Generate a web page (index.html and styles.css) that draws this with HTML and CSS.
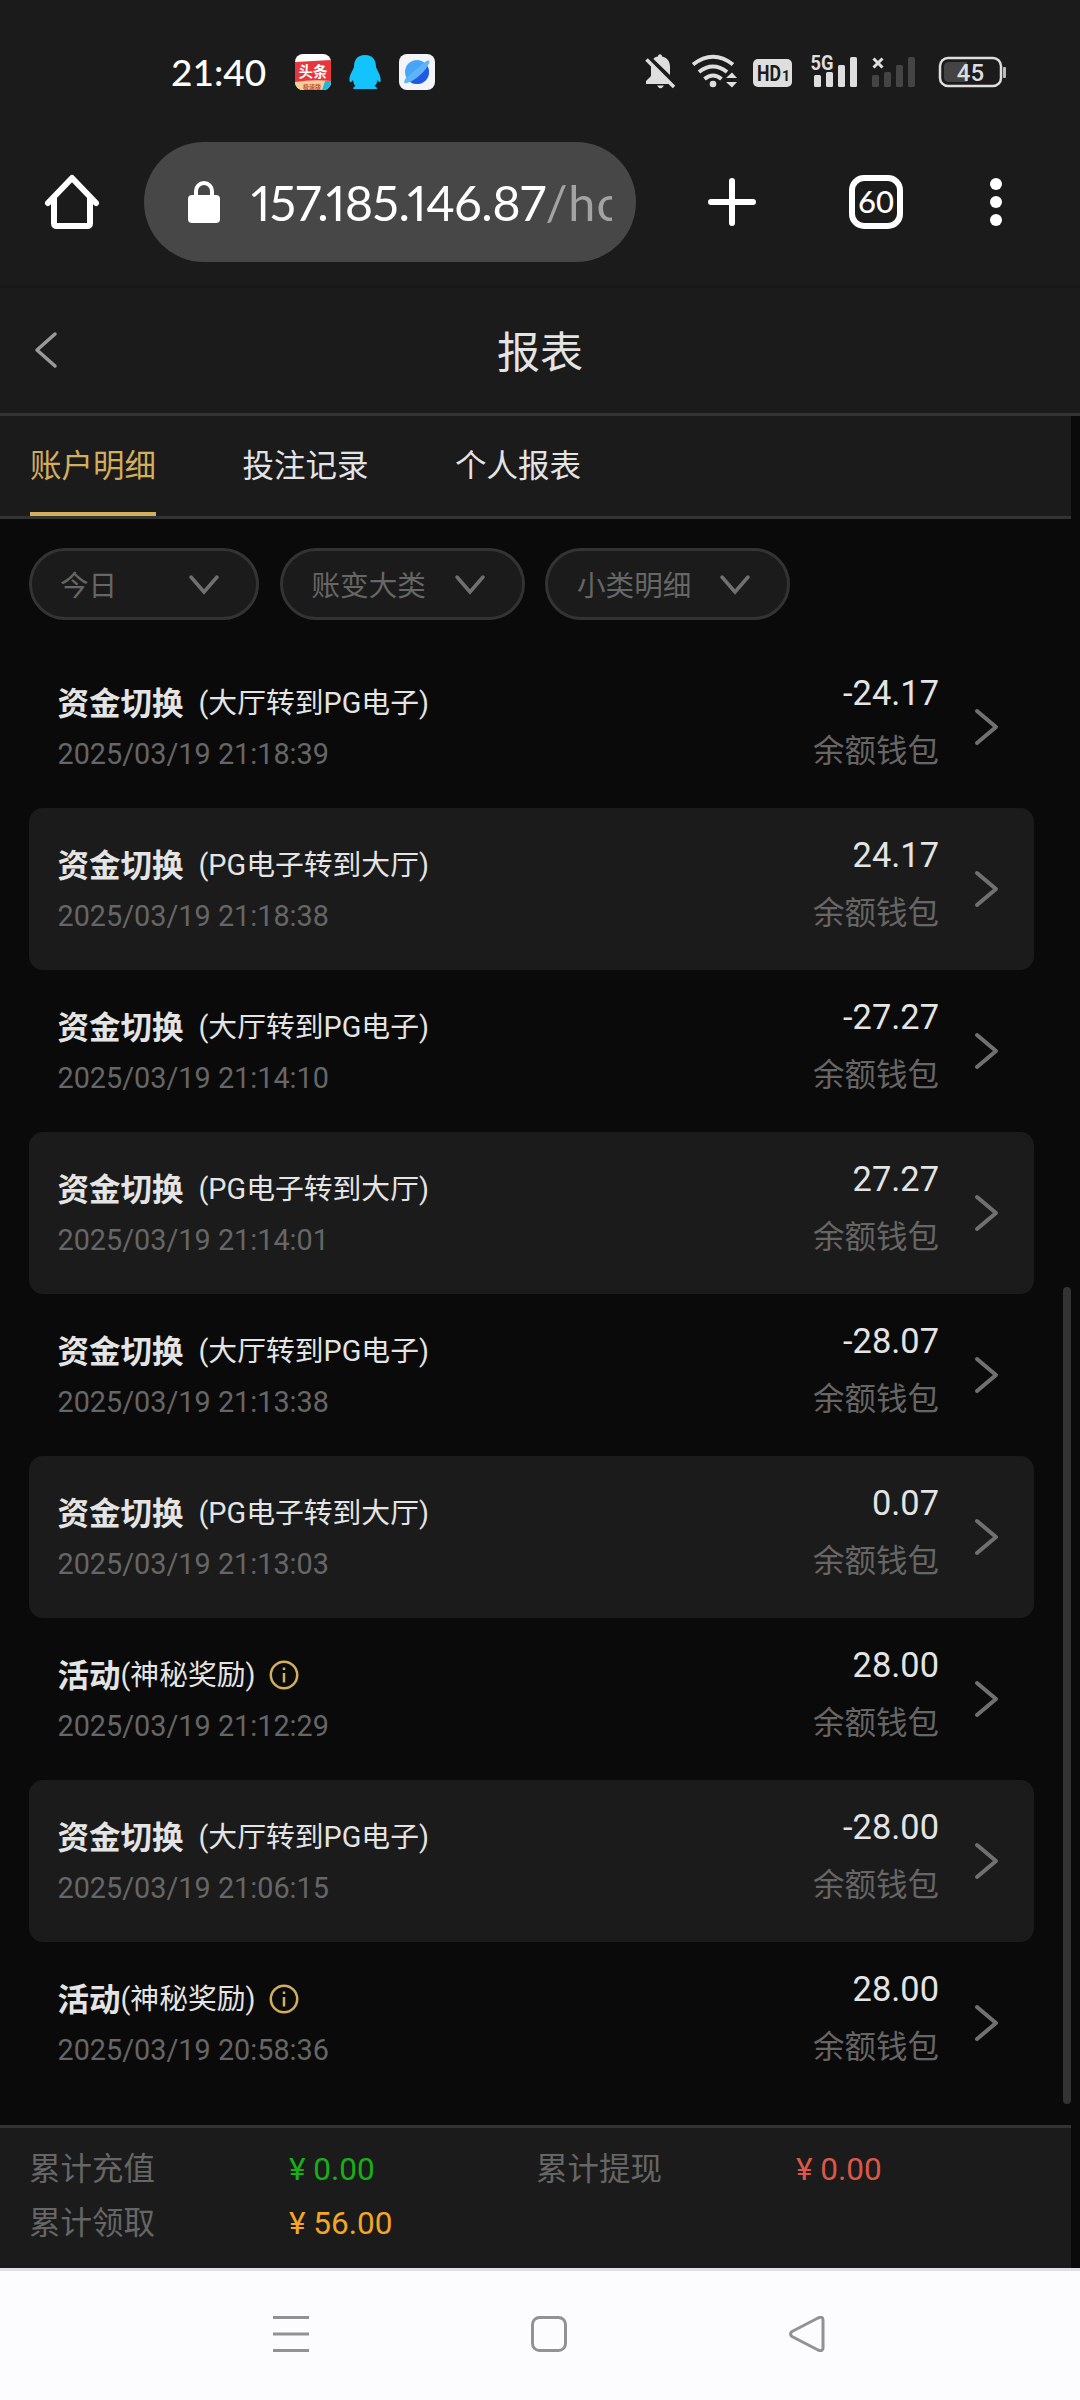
FILE: index.html
```html
<!DOCTYPE html>
<html lang="zh-CN">

<head>
    <meta charset="UTF-8">
    <meta name="viewport" content="width=device-width, initial-scale=1.0">
    <title>报表</title>
    <link rel="stylesheet" href="styles.css">
</head>

<body>
    <svg class="defs">
        <symbol id="right" viewBox="0 0 26 40"><path d="M3 4 L22 20 L3 36" /></symbol>
        <symbol id="down" viewBox="0 0 32 22"><path d="M3 3 L16 18 L29 3" /></symbol>
        <symbol id="info" viewBox="0 0 30 30">
            <circle cx="15" cy="15" r="13.2" />
            <path d="M15 13 V22.5" />
            <path d="M15 7.5 V10" />
        </symbol>
    </svg>

    <!-- status bar -->
    <div class="status">
        <span class="time">21:40</span>
        <svg class="apps" width="144" height="40" viewBox="0 0 144 40">
            <defs>
                <clipPath id="c1"><rect x="2" y="2" width="36" height="36" rx="8" /></clipPath>
                <clipPath id="c3"><circle cx="124" cy="20" r="12" /></clipPath>
            </defs>
            <g clip-path="url(#c1)">
                <rect x="2" y="2" width="36" height="36" fill="#fff" />
                <path d="M2 10 L38 8 V29 L2 31 Z" fill="#e8373c" />
                <path d="M2 30 Q20 27 38 29 V38 H2 Z" fill="#f8cf98" />
                <path d="M32 29 H38 V38 H29 Z" fill="#20b8d8" />
                <text x="20" y="25" class="tt">头条</text>
                <text x="19" y="36.5" class="tt2">极速版</text>
            </g>
            <path d="M72 3 C64 3 61 8 61 15 C60 18 57 22 56.500 26 C56 30 57 32 60 28 C60.500 31 61 33 62.500 34 C60 35 59.500 37 61 37 H83 C85 37 84 35 81.500 34 C83 33 84 31 84.500 28 C87.500 32 88 30 87.500 26 C87 22 84 18 83 15 C83 8 80 3 72 3 Z" fill="#12c4fb" />
            <rect x="106" y="2" width="36" height="36" rx="8" fill="#f3f4f7" />
            <circle cx="124" cy="20" r="12" fill="#48a5f5" />
            <path d="M109 32 Q124 28 140 8 V38 H109 Z" fill="#2158e4" clip-path="url(#c3)" />
            <path d="M132 10 C137 7 138 9 134 15 C129 23 119 30 114 31 C110 32 111 29 113 26 Z" fill="#5eb4f8" />
        </svg>
        <svg class="sys" width="390" height="40" viewBox="0 0 390 40">
            <!-- bell -->
            <g fill="#dedede">
                <path d="M5 32 V29 L10 24 V14 C10 8 13 5 17 4.500 C17 1.500 21 1.500 21 4.500 C26 5.500 29 9 29 15 V24 L35 30 V32 Z" />
                <path d="M16 33.500 H23 Q19.500 39 16 33.500 Z" />
            </g>
            <path d="M7 6 L37 35" stroke="#1b1b1b" stroke-width="6" />
            <path d="M5.500 7.500 L33 35" stroke="#dedede" stroke-width="3.500" />
            <!-- wifi -->
            <g fill="none" stroke="#dedede" stroke-width="4">
                <path d="M52 12.500 Q72 -3 92 12.500" />
                <path d="M58 20 Q72 9 86 20" />
                <path d="M63.500 27 Q72 20 80.500 27" />
            </g>
            <circle cx="72" cy="32" r="3.300" fill="#dedede" />
            <path d="M85 26 L91 20.500 L96 26 Z M85 30 L91 35.500 L96 30 Z" fill="#dedede" />
            <rect x="112" y="7" width="39" height="28" rx="5" fill="#dedede" />
            <text x="116" y="29" class="hd" textLength="24" lengthAdjust="spacingAndGlyphs">HD</text>
            <text x="141" y="29" class="hd1">1</text>
            <text x="169.500" y="18" class="g5" textLength="23" lengthAdjust="spacingAndGlyphs">5G</text>
            <g fill="#dedede">
                <rect x="173" y="23" width="7" height="12" rx="1.500" />
                <rect x="185" y="20" width="7" height="15" rx="1.500" />
                <rect x="197" y="13" width="7" height="22" rx="1.500" />
                <rect x="209" y="5" width="7" height="30" rx="1.500" />
            </g>
            <g fill="#444">
                <rect x="231" y="23" width="7" height="12" rx="1.500" />
                <rect x="243" y="20" width="7" height="15" rx="1.500" />
                <rect x="255" y="13" width="7" height="22" rx="1.500" />
                <rect x="267" y="5" width="7" height="30" rx="1.500" />
            </g>
            <path d="M232.500 6.500 L241.500 15.500 M241.500 6.500 L232.500 15.500" stroke="#dedede" stroke-width="3" />
            <!-- battery -->
            <rect x="299" y="6" width="61" height="28" rx="8" fill="none" stroke="#dedede" stroke-width="2.500" />
            <path d="M308 10 H326 V30 H308 Q303 30 303 25 V15 Q303 10 308 10 Z" fill="#444" />
            <rect x="362" y="15" width="3" height="11" rx="1" fill="#bbb" />
            <text x="329.500" y="29" class="bat">45</text>
        </svg>
    </div>

    <!-- browser bar -->
    <div class="browser">
        <svg class="home" width="60" height="60" viewBox="0 0 60 60">
            <path d="M6 31 L30 6 L54 31 M12 26 V51 Q12 54 15 54 H45 Q48 54 48 51 V26" />
        </svg>
        <div class="url">
            <svg width="32" height="42" viewBox="0 0 32 42">
                <rect x="0" y="14" width="32" height="28" rx="4" fill="#fff" />
                <path d="M8 16 V10 A8 8 0 0 1 24 10 V16" fill="none" stroke="#fff" stroke-width="4" />
            </svg>
            <div class="address">157.185.146.87<span>/ho</span></div>
        </div>
        <svg class="plus" width="48" height="48" viewBox="0 0 48 48"><path d="M24 3 V45 M3 24 H45" /></svg>
        <div class="count">60</div>
        <svg class="dots" width="12" height="48" viewBox="0 0 12 48">
            <circle cx="6" cy="6" r="6" /><circle cx="6" cy="24" r="6" /><circle cx="6" cy="42" r="6" />
        </svg>
    </div>

    <div class="header">
        <svg class="back" width="28" height="42" viewBox="0 0 28 42"><path d="M23 5 L5 21 L23 37" /></svg>
        <h1>报表</h1>
    </div>

    <div class="page">
        <div class="tabs">
            <a class="active">账户明细</a>
            <a>投注记录</a>
            <a>个人报表</a>
        </div>

        <div class="filters">
            <div class="filter small">今日<svg><use href="#down" /></svg></div>
            <div class="filter">账变大类<svg><use href="#down" /></svg></div>
            <div class="filter">小类明细<svg><use href="#down" /></svg></div>
        </div>

        <div class="content">
            <div class="list">
                <div class="row">
                    <div class="left">
                        <p class="name"><b>资金切换</b><span class="gap">(大厅转到PG电子)</span></p>
                        <p class="date">2025/03/19 21:18:39</p>
                    </div>
                    <div class="right">
                        <p class="amount">-24.17</p>
                        <p class="wallet">余额钱包</p>
                    </div>
                    <svg class="arrow"><use href="#right" /></svg>
                </div>
                <div class="row">
                    <div class="left">
                        <p class="name"><b>资金切换</b><span class="gap">(PG电子转到大厅)</span></p>
                        <p class="date">2025/03/19 21:18:38</p>
                    </div>
                    <div class="right">
                        <p class="amount">24.17</p>
                        <p class="wallet">余额钱包</p>
                    </div>
                    <svg class="arrow"><use href="#right" /></svg>
                </div>
                <div class="row">
                    <div class="left">
                        <p class="name"><b>资金切换</b><span class="gap">(大厅转到PG电子)</span></p>
                        <p class="date">2025/03/19 21:14:10</p>
                    </div>
                    <div class="right">
                        <p class="amount">-27.27</p>
                        <p class="wallet">余额钱包</p>
                    </div>
                    <svg class="arrow"><use href="#right" /></svg>
                </div>
                <div class="row">
                    <div class="left">
                        <p class="name"><b>资金切换</b><span class="gap">(PG电子转到大厅)</span></p>
                        <p class="date">2025/03/19 21:14:01</p>
                    </div>
                    <div class="right">
                        <p class="amount">27.27</p>
                        <p class="wallet">余额钱包</p>
                    </div>
                    <svg class="arrow"><use href="#right" /></svg>
                </div>
                <div class="row">
                    <div class="left">
                        <p class="name"><b>资金切换</b><span class="gap">(大厅转到PG电子)</span></p>
                        <p class="date">2025/03/19 21:13:38</p>
                    </div>
                    <div class="right">
                        <p class="amount">-28.07</p>
                        <p class="wallet">余额钱包</p>
                    </div>
                    <svg class="arrow"><use href="#right" /></svg>
                </div>
                <div class="row">
                    <div class="left">
                        <p class="name"><b>资金切换</b><span class="gap">(PG电子转到大厅)</span></p>
                        <p class="date">2025/03/19 21:13:03</p>
                    </div>
                    <div class="right">
                        <p class="amount">0.07</p>
                        <p class="wallet">余额钱包</p>
                    </div>
                    <svg class="arrow"><use href="#right" /></svg>
                </div>
                <div class="row">
                    <div class="left">
                        <p class="name"><b>活动</b><span>(神秘奖励)</span><svg class="info"><use href="#info" /></svg></p>
                        <p class="date">2025/03/19 21:12:29</p>
                    </div>
                    <div class="right">
                        <p class="amount">28.00</p>
                        <p class="wallet">余额钱包</p>
                    </div>
                    <svg class="arrow"><use href="#right" /></svg>
                </div>
                <div class="row">
                    <div class="left">
                        <p class="name"><b>资金切换</b><span class="gap">(大厅转到PG电子)</span></p>
                        <p class="date">2025/03/19 21:06:15</p>
                    </div>
                    <div class="right">
                        <p class="amount">-28.00</p>
                        <p class="wallet">余额钱包</p>
                    </div>
                    <svg class="arrow"><use href="#right" /></svg>
                </div>
                <div class="row">
                    <div class="left">
                        <p class="name"><b>活动</b><span>(神秘奖励)</span><svg class="info"><use href="#info" /></svg></p>
                        <p class="date">2025/03/19 20:58:36</p>
                    </div>
                    <div class="right">
                        <p class="amount">28.00</p>
                        <p class="wallet">余额钱包</p>
                    </div>
                    <svg class="arrow"><use href="#right" /></svg>
                </div>
            </div>
            <div class="scrollbar"></div>
        </div>

        <div class="total">
            <span>累计充值</span><span class="green">¥ 0.00</span>
            <span>累计提现</span><span class="red">¥ 0.00</span>
            <span>累计领取</span><span class="orange">¥ 56.00</span>
        </div>
    </div>

    <!-- system navigation -->
    <div class="nav">
        <svg width="36" height="36" viewBox="0 0 36 36"><path d="M0 1.500 H36 M0 18 H36 M0 34.500 H36" /></svg>
        <svg width="36" height="36" viewBox="0 0 36 36"><rect x="1.500" y="1.500" width="33" height="33" rx="7" /></svg>
        <svg width="36" height="36" viewBox="0 0 36 36"><path d="M3 15.500 L29 2 Q34 0 34 4 V32 Q34 36 29 34 L3 20.500 Q0 18 3 15.500 Z" /></svg>
    </div>
</body>

</html>
```
FILE: styles.css
```css
* {
    box-sizing: border-box;
    margin: 0;
    padding: 0;
}

body {
    width: 1080px;
    height: 2400px;
    overflow: hidden;
    background: #0a0a0a;
    color: #e4e4e4;
    font-family: Roboto, "Noto Sans CJK SC", sans-serif;
}

svg {
    display: block;
    flex-shrink: 0;
}

.defs {
    width: 0;
    height: 0;
    position: absolute;
}

/* status bar */

.status {
    height: 142px;
    padding-top: 52px;
    background: #1b1b1b;
    display: flex;
}

.time {
    width: 121px;
    margin-left: 171px;
    margin-right: 1px;
    font-family: Lato, sans-serif;
    font-weight: 500;
    font-size: 37px;
    line-height: 40px;
    color: #fff;
}

.sys {
    margin-left: 204px;
}

.tt {
    font: 700 14.5px "Noto Sans CJK SC", sans-serif;
    fill: #fff;
    text-anchor: middle;
}

.tt2 {
    font: 700 6px "Noto Sans CJK SC", sans-serif;
    fill: #c8502c;
    text-anchor: middle;
}

.hd {
    font: 700 22px Roboto, sans-serif;
    fill: #1b1b1b;
}

.hd1 {
    font: 700 14px Roboto, sans-serif;
    fill: #1b1b1b;
}

.g5 {
    font: 700 21px Roboto, sans-serif;
    fill: #dedede;
}

.bat {
    font: 500 24px Roboto, sans-serif;
    fill: #dedede;
    text-anchor: middle;
}

/* browser bar */

.browser {
    height: 146px;
    background: #1b1b1b;
    border-bottom: 2px solid #171717;
    display: flex;
    align-items: center;
    padding-bottom: 24px;
}

.home {
    margin-left: 42px;
    margin-right: 42px;
    fill: none;
    stroke: #fff;
    stroke-width: 6;
    stroke-linecap: round;
    stroke-linejoin: round;
}

.url {
    width: 492px;
    height: 120px;
    border-radius: 60px;
    background: #474747;
    padding-left: 44px;
    display: flex;
    align-items: center;
}

.address {
    width: 361px;
    margin-left: 31px;
    overflow: hidden;
    white-space: nowrap;
    font-family: Lato, sans-serif;
    font-size: 48.5px;
    font-variant-numeric: proportional-nums;
    letter-spacing: -0.5px;
    color: #fff;
}

.address span {
    color: #a3a3a3;
    letter-spacing: 1px;
}

.plus {
    margin-left: 72px;
    stroke: #fff;
    stroke-width: 6;
    stroke-linecap: round;
}

.count {
    width: 54px;
    height: 54px;
    margin-left: 93px;
    border: 6px solid #fff;
    border-radius: 15px;
    color: #fff;
    font-family: Lato, sans-serif;
    font-weight: 500;
    font-size: 31px;
    line-height: 41px;
    text-align: center;
}

.dots {
    margin-left: 87px;
    fill: #fff;
}

/* page header */

.header {
    height: 128px;
    background: #1b1b1b;
    border-bottom: 3px solid #333;
    display: flex;
    align-items: center;
}

.back {
    margin-left: 32px;
    margin-bottom: 2px;
    fill: none;
    stroke: #999;
    stroke-width: 3.5;
    stroke-linecap: round;
    stroke-linejoin: round;
}

.header h1 {
    flex: 1;
    margin-right: 60px;
    padding-bottom: 4px;
    text-align: center;
    font-size: 43px;
    font-weight: 400;
}

.page {
    width: 1071px;
}

.tabs {
    height: 103px;
    padding-left: 30px;
    background: #1b1b1b;
    border-bottom: 3px solid #333;
    display: flex;
    gap: 86.5px;
}

.tabs a {
    height: 100px;
    font-size: 31.5px;
    line-height: 101px;
    border-bottom: 4px solid transparent;
}

.tabs .active {
    color: #d2ae5d;
    border-color: #d2ae5d;
}

.filters {
    padding: 29px 0 26px 29px;
    display: flex;
    gap: 20.5px;
}

.filter {
    width: 245px;
    height: 72px;
    border: 3px solid #333;
    border-radius: 36px;
    background: #1b1b1b;
    padding: 0 36px 2px 29px;
    display: flex;
    align-items: center;
    justify-content: space-between;
    font-size: 28.6px;
    color: #666;
}

.filter.small {
    width: 230px;
    padding-left: 28px;
}

.filter svg {
    width: 32px;
    height: 22px;
    margin-top: 3px;
    fill: none;
    stroke: #707070;
    stroke-width: 3.5;
    stroke-linecap: round;
}

/* records */

.content {
    height: 1479px;
    display: flex;
    justify-content: space-between;
}

.list {
    width: 1005px;
    margin-left: 29px;
}

.row {
    height: 162px;
    border-radius: 14px;
    padding: 0 34px 0 28.5px;
    display: flex;
    align-items: center;
}

.row:nth-child(even) {
    background: #1b1b1b;
}

.left {
    flex: 1;
    padding-top: 3px;
}

.name {
    height: 50px;
    display: flex;
    align-items: center;
    font-size: 28.8px;
    line-height: 46px;
}

.name b {
    font-size: 31.5px;
    padding-top: 3px;
}

.name span {
    padding-bottom: 1px;
}

.name .gap {
    margin-left: 15px;
}

.info {
    width: 30px;
    height: 30px;
    margin-left: 13px;
    margin-bottom: 2px;
    fill: none;
    stroke: #d2ae5d;
    stroke-width: 2.5;
}

.date {
    font-size: 28.8px;
    line-height: 50px;
    color: #666;
}

.right {
    text-align: right;
    margin-right: 35px;
    padding-bottom: 6px;
}

.amount {
    font-size: 34.4px;
    line-height: 55px;
}

.wallet {
    font-size: 31.5px;
    line-height: 61px;
    color: #666;
}

.arrow {
    width: 26px;
    height: 40px;
    fill: none;
    stroke: #707070;
    stroke-width: 4;
    stroke-linecap: round;
    stroke-linejoin: round;
}

.scrollbar {
    width: 8px;
    height: 817px;
    margin-top: 641px;
    border-radius: 4px;
    background: #333;
}

/* totals */

.total {
    height: 143px;
    padding: 15px 0 0 29px;
    background: #1b1b1b;
    border-top: 3px solid #333;
    display: grid;
    grid-template-columns: 260px 247px 260px 1fr;
    grid-auto-rows: 54px;
    font-size: 31.5px;
    line-height: 54px;
    color: #666;
}

.green {
    color: #18ae18;
}

.red {
    color: #db5848;
}

.orange {
    color: #f5a623;
}

.nav {
    height: 132px;
    background: #fcfcfe;
    border-top: 3px solid #dde0e7;
    display: flex;
    padding: 45px 0 0 273px;
    gap: 222px;
}

.nav svg {
    fill: none;
    stroke: #929294;
    stroke-width: 3;
}
```
